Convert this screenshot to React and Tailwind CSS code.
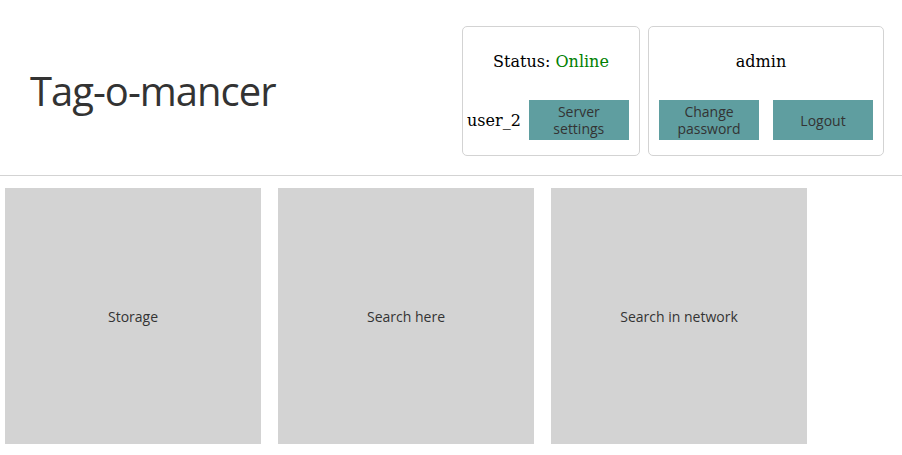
export default function App() {
  const sans = "font-['Open_Sans',_'Noto_Sans',_sans-serif]";
  const serif = "font-['DejaVu_Serif',_serif]";
  const btn = `w-[100px] h-[40px] bg-[#5f9ea0] text-[#333] text-[14px] leading-[17px] flex items-center justify-center text-center ${sans}`;
  return (
    <div className="w-[902px] h-[455px] bg-white overflow-hidden">
      <header className="h-[176px] border-b border-[#d3d3d3] flex items-start">
        <h1 className={`${sans} text-[40px] leading-[48px] text-[#333] ml-[30px] mt-[67px] tracking-[-1px]`}>
          Tag-o-mancer
        </h1>
        <div className="ml-auto mr-[18px] mt-[26px] flex gap-[8px]">
          <div className={`w-[178px] h-[130px] border border-[#d3d3d3] rounded-[5px] flex flex-col ${serif} text-[16px] text-black`}>
            <div className="pt-[25px] h-[44px] leading-[20px] text-center">
              Status: <span className="text-[#008000]">Online</span>
            </div>
            <div className="mt-[29px] flex items-center pl-[4px]">
              <span className="leading-[20px] mt-[1px]">user_2</span>
              <div className={`${btn} ml-[8px]`}>Server<br />settings</div>
            </div>
          </div>
          <div className={`w-[236px] h-[130px] border border-[#d3d3d3] rounded-[5px] flex flex-col ${serif} text-[16px] text-black`}>
            <div className="pt-[25px] pr-[10px] h-[44px] leading-[20px] text-center">admin</div>
            <div className="mt-[29px] flex justify-center gap-[14px]">
              <div className={btn}>Change<br />password</div>
              <div className={btn}>Logout</div>
            </div>
          </div>
        </div>
      </header>
      <main className={`flex gap-[17px] pl-[5px] pt-[12px] ${sans}`}>
        {["Storage", "Search here", "Search in network"].map((t) => (
          <div key={t} className="w-[256px] h-[256px] bg-[#d3d3d3] flex items-center justify-center text-[14px] text-[#333]">
            {t}
          </div>
        ))}
      </main>
    </div>
  );
}
